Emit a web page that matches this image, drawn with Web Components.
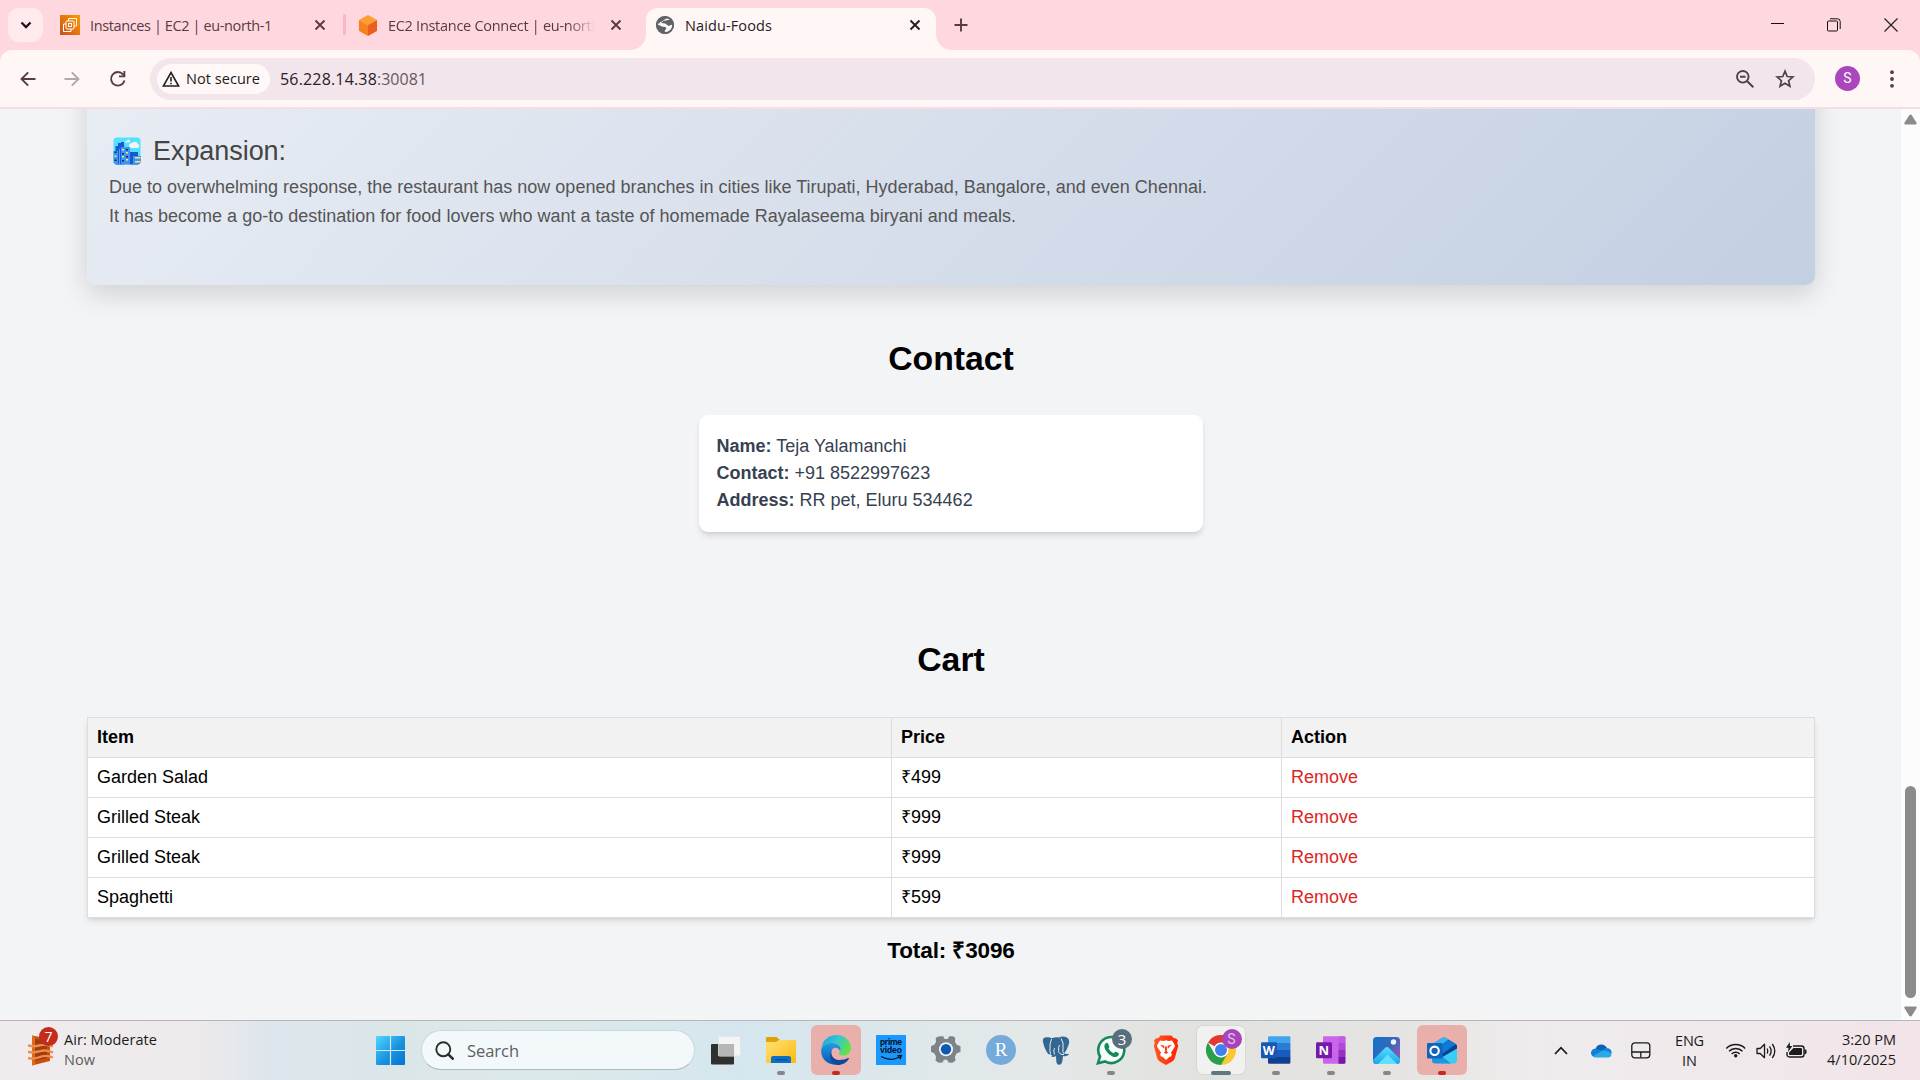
<!DOCTYPE html>
<html lang="en">
<head>
<meta charset="utf-8">
<title>Naidu-Foods</title>
<style>
html,body{margin:0;height:100%;overflow:hidden}
body{width:1920px;height:1080px;background:#f3f4f6}
</style>
</head>
<body>
<desktop-screen></desktop-screen>
<script>
const UI = '"Open Sans","Noto Sans",sans-serif';
const define = (name, html, hook) => {
  const t = document.createElement('template');
  t.innerHTML = html;
  customElements.define(name, class extends HTMLElement {
    constructor() {
      super();
      this.attachShadow({mode: 'open'}).appendChild(t.content.cloneNode(true));
    }
    connectedCallback() { if (hook) hook(this, this.shadowRoot); }
  });
};

/* name: [width, height, viewBox, markup] */
const ICONS = {
  down: [12, 8, '0 0 12 8', '<path d="M1.5 1.5 6 6l4.500-4.500" fill="none" stroke="#1f1416" stroke-width="2.300"/>'],
  ec2: [20, 20, '0 0 20 20', '<defs><linearGradient id="g" x1="0" y1="1" x2="1" y2="0"><stop stop-color="#c8511b"/><stop offset="1" stop-color="#f90"/></linearGradient></defs><rect width="20" height="20" fill="url(#g)"/><g fill="none" stroke="#fff" stroke-width="1"><path d="M8.500 6V3.500h8V11H14M6 9H3.500v7.500H11V14"/><rect x="6" y="6" width="8" height="8" rx="1"/><rect x="8.500" y="8.500" width="3" height="3"/></g>'],
  cube: [20, 21, '0 0 20 21', '<path d="m10 0 9 5-9 5-9-5z" fill="#ff9d2e"/><path d="m1 5 9 5v11l-9-5z" fill="#f58220"/><path d="m19 5-9 5v11l9-5z" fill="#e9601e"/>'],
  x: [12, 12, '0 0 12 12', '<path d="m1.500 1.500 9 9m0-9-9 9" stroke="currentColor" stroke-width="1.900"/>'],
  globe: [20, 20, '0 0 20 20', '<circle cx="10" cy="10" r="9" fill="#5f6368"/><path d="M15.500 4.500C13 3 11 3.500 9.800 4.500 8.500 5.700 6.500 5.300 6.300 7c-.1 1.500 2.400 1.100 3.900 1.600 1.600.5 1.500 2 3.200 2.200 1.500.2 2-1.300 3.900-1 .3 3.400-2.300 6.700-5.700 7.200-1.300.1-2.200-.3-1.700-1.500.4-1 1.300-1.300 1.300-2.300 0-1.200-1.700-1.300-3.100-1.400C6 11.600 5 10.200 2.800 9.800c0-1 .2-1.900.6-2.800" fill="#fff7f5"/><path d="M8 3.200c1.200.3 1.300 1.400.3 2.200C7.100 6.300 5 6.300 4.500 8.200L3 9c.2-3 2.500-5.300 5-5.800zM12.500 6.200c1.200.2 1.200 1.600 2.800 1.400l.7-1.600-1.300-1.500z" fill="#5f6368"/><circle cx="10" cy="10" r="8.200" fill="none" stroke="#5f6368" stroke-width="1.700"/>'],
  plus: [14, 14, '0 0 14 14', '<path d="M7 .5v13M.5 7h13" stroke="#5a3a42" stroke-width="1.900"/>'],
  min: [13, 13, '0 0 13 13', '<path d="M0 5.500h13" stroke="#111" stroke-width="1"/>'],
  max: [14, 14, '0 0 14 14', '<rect x=".5" y="3" width="10" height="10" rx="1" fill="none" stroke="#111"/><path d="M3 .8h7.500q2.700 0 2.700 2.700V11" fill="none" stroke="#111"/>'],
  close: [14, 14, '0 0 14 14', '<path d="m.5.500 13 13m0-13-13 13" stroke="#222" stroke-width="1.200"/>'],
  back: [16, 16, '0 0 16 16', '<path d="M15.500 8H2M8.200 1.300 1.500 8l6.700 6.700" fill="none" stroke="#5a3b42" stroke-width="1.900"/>'],
  fwd: [16, 16, '0 0 16 16', '<path d="M.5 8H14M7.800 1.300 14.500 8l-6.700 6.700" fill="none" stroke="#b5a6a8" stroke-width="1.900"/>'],
  reload: [18, 18, '0 0 18 18', '<path d="M15.500 10.500A6.800 6.800 0 1 1 14 4.300l1.700 1.900" fill="none" stroke="#5a3b42" stroke-width="1.900"/><path d="M16.300 1v6.300H10V5.500h4.400V1z" fill="#5a3b42"/>'],
  warn: [18, 16, '0 0 18 16', '<path d="M9 1.500 16.600 15H1.400z" fill="none" stroke="#222" stroke-width="1.600"/><path d="M9 6v4.500m0 1.200v1.500" stroke="#222" stroke-width="1.600"/>'],
  zoomout: [20, 20, '0 0 20 20', '<circle cx="7.800" cy="7.800" r="5.800" fill="none" stroke="#4d4246" stroke-width="1.900"/><path d="m12 12 6.300 6.300M5 7.800h5.600" stroke="#4d4246" stroke-width="2"/>'],
  star: [20, 20, '0 0 20 20', '<path d="m10 2.200 2.200 5.300 5.700.500-4.300 3.700 1.300 5.600L10 14.300l-4.900 3 1.300-5.600L2.100 8l5.700-.5z" fill="none" stroke="#4d4246" stroke-width="1.700"/>'],
  dots: [4, 18, '0 0 4 18', '<g fill="#5a3b42"><circle cx="2" cy="2.200" r="1.900"/><circle cx="2" cy="9" r="1.900"/><circle cx="2" cy="15.800" r="1.900"/></g>'],
  up: [13, 11, '0 0 13 11', '<path d="M6.500.5q.8 0 1.300.8l4.700 7.500q.7 1.500-.8 1.700H1.300Q-.2 10.300.5 8.800L5.200 1.300Q5.700.5 6.500.5z" fill="#8b8b8b"/>'],
  dn: [13, 11, '0 0 13 11', '<path d="M6.500 10.500q.8 0 1.300-.8l4.700-7.500Q13.200.7 11.700.500H1.300Q-.2.700.5 2.200l4.700 7.500q.5.800 1.300.8z" fill="#8b8b8b"/>'],
  city: [28, 28, '0 0 28 28', '<defs><clipPath id="c"><rect x=".5" y=".5" width="27" height="27" rx="3.500"/></clipPath></defs><g clip-path="url(#c)"><rect width="28" height="28" fill="#50e2ff"/><path d="M16 8a3 3 0 0 1 3-2 3.500 3.500 0 0 1 6 1q2 1 1 3-1 1.500-3 1h-4q-3.500-.3-3-3zM12 5q0-1.500 2-1.500 1.500-2 3 0 .8 2-1 2h-3z" fill="#f4f4f4"/><path d="M2.500 9H5V6h3V5h3v23H2.500zM17 15h8v4h3v9H17z" fill="#1c56d8"/><path d="M0 14h5v14H0zM8 10h9v18H8zM20 19h8v9h-8z" fill="#3a96f2"/><path d="M6 12h1v16H6z" fill="#50a8ff"/><g fill="#ffe45e"><path d="M9 12h2v1.500H9zm4 3h2v1.500h-2zM9 19h2v1.500H9zm4 3h2v1.500h-2zM1.500 18.500h2V20h-2zM22 20h6v1.500h-6zm0 4h6v1.500h-6z"/></g><g fill="#14225c"><path d="M13 12h2v1.500h-2zm-4 4h2v1.500H9zm4 3h2v1.500h-2zm-4 4h2v1.500H9zM1.500 14.500h2V16h-2zm0 8h2V24h-2z"/></g></g>'],
  air: [27, 31, '0 0 27 31', '<path d="M4 .5 22 4v22L4 30.500z" fill="#c8500f"/><path d="M7 4v22l12-3V6z" fill="#9e3d0e"/><path d="M4 .5 7 2v27l-3 1.500z" fill="#e06a1c"/><path d="M0 10.500q6 1.500 11 0t14 .8M0 17q6 1 12-.800t13 1.300M0 23q6 1.500 12-1t13 .5" fill="none" stroke="#f28a4b" stroke-width="2.400"/>'],
  win: [29, 29, '0 0 29 29', '<defs><linearGradient id="w" x1="0" y1="0" x2="29" y2="29" gradientUnits="userSpaceOnUse"><stop stop-color="#50d8ff"/><stop offset=".55" stop-color="#1a93e0"/><stop offset="1" stop-color="#0272cf"/></linearGradient></defs><path d="M1 0h12.900v13.900H0V1q0-1 1-1zm14.100 0H28q1 0 1 1v12.900H15.100zM0 15.100h13.900V29H1q-1 0-1-1zm15.100 0H29V28q0 1-1 1H15.100z" fill="url(#w)"/>'],
  mag: [19, 19, '0 0 19 19', '<circle cx="8.300" cy="8.300" r="7" fill="none" stroke="#2a2c2e" stroke-width="1.900"/><path d="m13.300 13.300 4.400 4.400" stroke="#2a2c2e" stroke-width="2.600" stroke-linecap="round"/>'],
  task: [30, 29, '0 0 30 29', '<rect y="8" width="23" height="20.500" rx="1" fill="#30312f"/><rect x="7.500" y=".5" width="22" height="19.500" rx="1" fill="#f4f4f4" stroke="#e2e5e6"/><path d="M7.500 8H23v12H7.500z" fill="#b5b7b6"/>'],
  folder: [30, 27, '0 0 30 27', '<defs><linearGradient id="f" x1="0" y1="0" x2="1" y2="1"><stop stop-color="#ffe07a"/><stop offset="1" stop-color="#ffb90a"/></linearGradient></defs><path d="M0 1q0-1 1-1h9.500l3.500 3H28q2 0 2 2v6H0z" fill="#e0a006"/><path d="M0 5h10l3-2h16q1 0 1 1v21q0 1-1 1H1q-1 0-1-1z" fill="url(#f)"/><path d="M5 26v-5q0-2 2-2h16q2 0 2 2v5z" fill="#0f6fc7"/><path d="M9 22h12v1.500H9z" fill="#0a4f95"/>'],
  edge: [30, 30, '0 0 30 30', '<defs><linearGradient id="e" x1="0" y1="0" x2="1" y2=".5"><stop stop-color="#1a9fe0"/><stop offset=".5" stop-color="#33c5d6"/><stop offset="1" stop-color="#5fe24c"/></linearGradient><linearGradient id="e2" x1="0" y1="0" x2="0" y2="1"><stop stop-color="#1f9de2"/><stop offset="1" stop-color="#0d54ad"/></linearGradient></defs><path d="M.5 14C1 5 8 0 15.500 0 24 0 30 6 30 13c0 5-4 7.500-7.500 7.500S18 19 18 18s1.500-1.800 1.500-4c0-3.500-4-6-8.500-6C5.500 8 1.500 11 .5 14z" fill="url(#e)"/><path d="M.3 14.500C1.500 10.500 5.500 8 10.500 8c5 0 9 2.500 9 6 0 .7-.2 1.500-.5 2-1-3-4-4-6-3-2.700 1.500-3.500 4-3 7 .7 4.500 4.500 8.500 9 9.200C10 31.500-1 26 .3 14.500z" fill="url(#e2)"/><path d="M11.500 14c-3 4 0 11 6.500 11 4 0 7-1 9-2 .8-.3 1.200.3.800 1-2.300 3.800-6.500 6-11 6C10 29 6.500 20 11.500 14z" fill="#10489b"/>'],
  prime: [30, 30, '0 0 30 30', '<rect width="30" height="30" fill="#1a98ff"/><g font-family="Lato,sans-serif" font-weight="900" font-size="9" fill="#06131f"><text x="4" y="9.800" textLength="22">prime</text><text x="4" y="17.800" textLength="22">video</text></g><path d="M5 21.500q10 5.500 18.500.500M21.500 20.800l3.800-.3-1.300 3.800" fill="none" stroke="#06131f" stroke-width="1.400"/>'],
  gear: [30, 30, '0 0 30 30', '<path d="M8.500 1.300h3.700l1.300 2.700h3.300l1.300-2.700h3.700l2.500 1.500-.3 4.200 1.500 2.500 4 1.700v5.500l-4 1.700-1.500 3 .5 4.100-3 2.200-4-.3-1.500-2.600h-3l-1.500 2.700-4 .3-3-2.300.5-4.100-1.500-3-3.500-1.700v-5.500L3.500 9.500 5 7l-.3-4.200z" fill="#7e8388"/><circle cx="15" cy="14.300" r="7" fill="#f1f5f8"/><circle cx="15" cy="14.300" r="5.200" fill="#0d5ab5"/>'],
  rlogo: [30, 30, '0 0 30 30', '<circle cx="15" cy="15" r="15" fill="#75aadb"/><text x="15" y="21.300" text-anchor="middle" font-family="Liberation Serif,serif" font-size="19" fill="#fff">R</text>'],
  pg: [28, 29, '0 0 28 29', '<path d="M1 6Q0 1 5 1.200q3 .1 5 1 3-1.400 7-.8Q21-.2 25 1.500q3.500 2 1.500 7.500-1.500 5-4.500 8.500 2 .7 4 .2l1 .8q-2.500 2.500-6 1.500-.3 4-1 6.500-1 2.500-3 2.200-2.500-.2-2.700-3.700l-.300-5q-1 1-3 1-3-.2-2.500-2.500-2.500.5-4-3Q2 11.500 1 6z" fill="#336791"/><path d="M9.500 3Q7.500 8 8 12q-.5 3 .5 5.500-1.500 2.500 1.500 2M19 2.500q3 4 2 10-.5 3.500.5 5M12.500 18.500q-1.500-5.500.5-6.500M17.500 9q-1 1.500-1 5.500.5 4.500 5.500 4" fill="none" stroke="#e8eef2" stroke-width="1"/>'],
  wa: [30, 30, '0 0 30 30', '<path d="M2 28.200 4 21.500A13 13 0 1 1 9 26.400z" fill="#f7fbf9" stroke="#16895a" stroke-width="2.600"/><path d="M9.500 8.500q1.500-1.300 2.500 0l1.300 2.700q.3.900-.8 2.300 1.700 3.300 5 4.800 1.500-2 2.400-1.600l2.600 1.400q1 .8-.3 2.700-2.200 2.200-5.700.7-4.500-2-7-6.500-2.300-4 0-6.500z" fill="#16895a"/>'],
  brave: [26, 30, '0 0 26 30', '<defs><linearGradient id="b"><stop stop-color="#ff5a22"/><stop offset="1" stop-color="#ff2200"/></linearGradient></defs><path d="M7.500.5h11l2 2.500q3-.5 4.500 2.500l-.8 2.500 1 3-3.500 12.500q-.8 2-2.500 3L13 30l-6.200-3.500q-1.700-1-2.500-3L.8 11l1-3L1 5.500Q2.500 2.500 5.500 3z" fill="url(#b)"/><path d="m4.500 9.500 2.500-4 3.500.5 2.500-.7 2.500.7 3.500-.5 2.500 4 .5 2-4 6 .8 2.300-.8 1.700-1.500.2-3.500 3.300-3.500-3.300-1.500-.2-.8-1.700.8-2.300-4-6z" fill="#fff"/><path d="m7 9.700 4.300 1-.300 2.800zM19 9.700l-4.300 1 .3 2.800zM11.700 11.500h2.600l-.5 5 1.400 1-2.200 1.500-2.200-1.500 1.400-1z" fill="#ff3b13"/>'],
  chrome: [30, 30, '0 0 30 30', '<path d="M15 15 2 7.500A15 15 0 0 1 28 7.500H15z" fill="#e13b30"/><path d="M15 0A15 15 0 0 1 28 7.500L15 8z" fill="#e13b30"/><path d="M28 7.500A15 15 0 0 1 15 30l6.500-11.500L19 7.500z" fill="#fdc82f"/><path d="M2 7.500A15 15 0 0 0 15 30l6.500-11.200L8.500 18.800z" fill="#2a9e4b"/><circle cx="15" cy="15" r="7.500" fill="#fff"/><circle cx="15" cy="15" r="6" fill="#3f80ec"/>'],
  word: [30, 28, '0 0 30 28', '<path d="M7 1.500Q7 .3 8.200.3H28q1.400 0 1.400 1.400V7H7z" fill="#41a5ee"/><path d="M7 7h22.400v7H7z" fill="#2b7cd3"/><path d="M7 14h22.400v7H7z" fill="#185abd"/><path d="M7 21h22.400v5.500q0 1.300-1.400 1.300H8.200Q7 27.800 7 26.500z" fill="#103f91"/><rect y="6.300" width="16" height="16" rx="1.300" fill="#1a56b4"/><text x="7.800" y="19" text-anchor="middle" font-family="Open Sans,sans-serif" font-weight="700" font-size="12.500" fill="#fff">W</text>'],
  note: [30, 28, '0 0 30 28', '<path d="M7 1.500Q7 .3 8.200.3H28q1.400 0 1.400 1.400V26q0 1.800-1.400 1.800H8.200Q7 27.800 7 26.500z" fill="#ca64ea"/><path d="M22.500.3h5.500q1.400 0 1.400 1.400V7h-6.900z" fill="#c55be6"/><path d="M22.500 7h6.900v7h-6.900z" fill="#ae4bd5"/><path d="M22.500 14h6.900v7h-6.900z" fill="#9332bf"/><path d="M22.500 21h6.900v5.500q0 1.300-1.400 1.300h-5.500z" fill="#7719aa"/><rect y="6.300" width="16" height="16" rx="1.300" fill="#7719aa"/><text x="7.800" y="19" text-anchor="middle" font-family="Open Sans,sans-serif" font-weight="700" font-size="13" fill="#fff">N</text>'],
  photos: [28, 27, '0 0 28 27', '<defs><linearGradient id="p" x1="0" y1="0" x2="1" y2=".6"><stop stop-color="#0b74cf"/><stop offset=".6" stop-color="#3a66b8"/><stop offset="1" stop-color="#8759b5"/></linearGradient><linearGradient id="p2" x1="0" y1="0" x2="0" y2="1"><stop stop-color="#55dcff"/><stop offset="1" stop-color="#1aa8ea"/></linearGradient><clipPath id="pc"><rect width="27" height="27" rx="3.500"/></clipPath></defs><g clip-path="url(#pc)"><rect width="27" height="27" fill="url(#p)"/><path d="M0 23 12 11q2-1.800 4 0l11 11v5H0z" fill="url(#p2)"/><path d="m5 27 9.500-9.500L24 27z" fill="#5fe0ff"/><circle cx="20.500" cy="5" r="2.700" fill="#e8f6ff"/></g>'],
  outlook: [30, 27, '0 0 30 27', '<path d="m4 8 11-7q2-1 4 0l10 6q1 .8 1 2v6L16 21z" fill="#1469c8"/><path d="M4 8 15 1q2-1 4 0l2.500 1.500L9 12z" fill="#35b4f0"/><path d="m10 12 12.500-8.500L28 7 16 16z" fill="#0f7ad6"/><path d="m15 17 14-9.500q1 .8 1 2v4L16 21z" fill="#0a3f8f"/><path d="M30 11.500 12 22v1.500q0 3 3 3h12q3 0 3-3z" fill="#37cdf5"/><path d="M5 20h11l8 6.500H8q-3 0-3-3z" fill="#1c96e0"/><rect y="6" width="15.500" height="15.500" rx="1.300" fill="#0f65bd"/><circle cx="7.600" cy="13.800" r="4.200" fill="none" stroke="#fff" stroke-width="2.100"/>'],
  chev: [14, 9, '0 0 14 9', '<path d="M1 8l6-6.300L13 8" fill="none" stroke="#1b1b1b" stroke-width="1.800"/>'],
  cloud: [21, 14, '0 0 21 14', '<path d="M3 12.500Q0 11 .2 8.500.8 5 4.500 4.800 6 .5 10.500.5q3.500 0 5.500 3.500z" fill="#0364b8"/><path d="m5 5 7 1.500L16 4q4.500.5 4.700 5L4 13Q0 12.500.2 8.500.5 5.500 5 5z" fill="#1380d6"/><path d="m2 12 9-5q2-1 5 .3l4.500 2Q20.500 13.500 17 13.600H4.500Q3 13.600 2 12z" fill="#29a8ea"/>'],
  pad: [20, 17, '0 0 20 17', '<rect x=".8" y=".8" width="18" height="15" rx="3" fill="none" stroke="#1b1b1b" stroke-width="1.300"/><path d="M1 10h17.500M9.800 10v5.500" stroke="#1b1b1b" stroke-width="1.300"/>'],
  wifi: [22, 16, '0 0 22 16', '<g fill="none" stroke="#1b1b1b" stroke-width="1.500"><path d="M1.300 6.500a13.200 13.200 0 0 1 18.900 0M4 9.200a9.500 9.500 0 0 1 13.500 0M6.700 12a5.700 5.700 0 0 1 8 0"/></g><circle cx="10.700" cy="13.800" r="1.700" fill="#1b1b1b"/>'],
  sound: [21, 18, '0 0 21 18', '<g fill="none" stroke="#1b1b1b" stroke-width="1.300"><path d="M1 6.500h3.200L8.500 2.300v13.400l-4.300-4.200H1z" stroke-linejoin="round"/><path d="M11 6.500q1.500 2.500 0 5M13.500 4.300q3.300 4.700 0 9.400M16.300 2q5 7 0 14"/></g>'],
  batt: [21, 17, '0 0 21 17', '<path d="M7 4h8.500Q18 4 18 6.500v6q0 2.500-2.500 2.500h-12Q1 15 1 12.500V10" fill="none" stroke="#1b1b1b" stroke-width="1.400"/><path d="M7.500 6H15q1 0 1 1v5q0 1-1 1H4q-1 0-1-1v-1.500z" fill="#1b1b1b"/><path d="M18.500 7.500h1q1 0 1 1V11q0 1-1 1h-1zM3.800 0 0 5.700h2.500L2 10l4.300-6H3.800z" fill="#1b1b1b"/>'],
};
define('ui-icon', `<style>:host{display:block;flex:none}svg{display:block}</style>`, (el, r) => {
  const [w, h, vb, m] = ICONS[el.getAttribute('name')];
  r.querySelector('svg')?.remove();
  r.appendChild(document.createRange().createContextualFragment(
    `<svg xmlns="http://www.w3.org/2000/svg" width="${w}" height="${h}" viewBox="${vb}">${m}</svg>`));
});

/* One line of text whose tracking is set so that it spans "w" pixels. */
define('ui-text', `<style>:host{display:block;white-space:pre;flex:none}span{display:inline-block}</style><span><slot></slot></span>`, (el, r) => {
  const w = +el.getAttribute('w'), s = r.querySelector('span');
  if (!w) return;
  s.style.letterSpacing = '0';
  const n = s.getBoundingClientRect().width;
  s.style.letterSpacing = ((w - n) / el.textContent.length).toFixed(3) + 'px';
});

define('tab-strip', `<style>
:host{display:flex;height:50px;background:#ffd8df;align-items:flex-start;font:14.500px/20px ${UI};color:#5a3a42}
.search{width:35px;height:34px;margin:8px 17px 0 8px;border-radius:11px;background:#ffeaee;display:grid;place-items:center}
.tab{display:flex;align-items:center;height:34px;margin-top:8px;color:#5a3a42}
.tab ui-text{padding-top:2px}
.t1{width:266px;gap:10px}.t1 ui-text{width:214px}
.sep{width:3px;height:21px;margin:14px 12px 0 17px;background:#ffb5c6;border-radius:2px;flex:none}
.t2{gap:10px;width:266px}
.clip{width:208px;-webkit-mask-image:linear-gradient(90deg,#000 180px,transparent 207px);mask-image:linear-gradient(90deg,#000 180px,transparent 207px)}
.act{width:290px;height:42px;margin:8px 0 0 22px;background:#fff7f5;border-radius:12px 12px 0 0;position:relative;display:flex;align-items:flex-start;color:#2b1a1e}
.act ui-icon{margin-top:7px}.act .g{margin-left:9px}.act ui-text{margin:8px 0 0 10px;width:224px}.act .c{margin-top:11px}
.act:before,.act:after{content:"";position:absolute;bottom:0;width:15px;height:15px;background:radial-gradient(circle at 0 0,transparent 14.5px,#fff7f5 15px)}
.act:before{left:-15px}.act:after{right:-15px;transform:scaleX(-1)}
.plus{margin:18px 0 0 18px}
.win{margin-left:auto;display:flex;gap:43px;padding:18px 22px 0 0}
</style>
<div class="search"><ui-icon name="down"></ui-icon></div>
<div class="tab t1"><ui-icon name="ec2"></ui-icon><ui-text w="182">Instances | EC2 | eu-north-1</ui-text><ui-icon name="x"></ui-icon></div>
<div class="sep"></div>
<div class="tab t2"><ui-icon name="cube"></ui-icon><div class="clip"><ui-text w="212">EC2 Instance Connect | eu-north</ui-text></div><ui-icon name="x" style="margin-left:4px"></ui-icon></div>
<div class="act"><ui-icon class="g" name="globe"></ui-icon><ui-text w="87">Naidu-Foods</ui-text><ui-icon class="c" name="x"></ui-icon></div>
<ui-icon class="plus" name="plus"></ui-icon>
<div class="win"><ui-icon name="min"></ui-icon><ui-icon name="max"></ui-icon><ui-icon name="close"></ui-icon></div>`);

define('tool-bar', `<style>
:host{display:block;background:#ffd8df;font:16px/22px ${UI};color:#2b2024}
.bar{display:flex;align-items:center;height:57px;box-sizing:border-box;background:#fff7f5;border-radius:12px 12px 0 0;padding-left:20px}
.line{height:2px;background:#f4dee4}
.omni{display:flex;align-items:center;box-sizing:border-box;width:1665px;height:42px;border-radius:21px;background:#f2e5ec;margin-left:23px;padding:0 20px 0 7px}
.chip{display:flex;align-items:center;gap:6px;width:113px;height:30px;border-radius:15px;background:#fff8f6;padding-left:5px;box-sizing:border-box;font-size:14.500px;font-weight:500;color:#1e1a1c}
.url{display:flex;margin-left:10px;margin-right:auto;padding-top:1px}
.port{color:#65595f}
.av{width:25px;height:25px;border-radius:50%;background:#ab47bc;color:#fff;font:14px/25px Roboto,sans-serif;text-align:center;margin:0 30px 0 20px}
</style>
<div class="bar"><ui-icon name="back"></ui-icon><ui-icon name="fwd" style="margin-left:28px"></ui-icon><ui-icon name="reload" style="margin-left:29px"></ui-icon>
<div class="omni"><div class="chip"><ui-icon name="warn"></ui-icon><ui-text w="74">Not secure</ui-text></div>
<div class="url"><ui-text w="97">56.228.14.38</ui-text><ui-text class="port" w="50">:30081</ui-text></div>
<ui-icon name="zoomout" style="margin-right:20px"></ui-icon><ui-icon name="star"></ui-icon></div>
<div class="av">S</div><ui-icon name="dots"></ui-icon></div><div class="line"></div>`);

define('scroll-bar', `<style>
:host{display:flex;flex-direction:column;align-items:center;width:19px;background:#fcfcfc;flex:none}
.thumb{width:11px;height:212px;border-radius:6px;background:#8b8b8b;margin:661px 0 8px}
ui-icon{margin-top:5px}ui-icon.d{margin-top:0}
</style><ui-icon name="up"></ui-icon><div class="thumb"></div><ui-icon class="d" name="dn"></ui-icon>`);

define('story-card', `<style>
:host{display:flex;flex-direction:column;justify-content:flex-end;box-sizing:border-box;height:850px;margin-top:-674px;padding:0 22px 54px;border-radius:9px;background:linear-gradient(135deg,#f5f7fa,#c3cfe2);box-shadow:0 9px 28px rgba(0,0,0,.15);color:#555}
.h{display:flex;align-items:center;gap:12px;font-size:27px;line-height:32px;color:#444;padding-left:4px;margin-bottom:6px}
.p{font-size:18px;line-height:29px}
</style>
<div class="h"><ui-icon name="city"></ui-icon><ui-text w="133">Expansion:</ui-text></div>
<ui-text class="p" w="1098">Due to overwhelming response, the restaurant has now opened branches in cities like Tirupati, Hyderabad, Bangalore, and even Chennai.</ui-text>
<ui-text class="p" w="907">It has become a go-to destination for food lovers who want a taste of homemade Rayalaseema biryani and meals.</ui-text>`);

define('section-title', `<style>:host{display:block;text-align:center;font-weight:700;font-size:33.750px;line-height:40px;color:#000}</style><slot></slot>`);

define('contact-card', `<style>
:host{display:block;box-sizing:border-box;width:504px;height:117px;margin:0 auto;padding:18px 17.500px;background:#fff;border-radius:9px;box-shadow:0 4.500px 6.750px -1px rgba(0,0,0,.1),0 2px 4.500px -2px rgba(0,0,0,.12);font-size:18px;line-height:27px;color:#374151}
</style><slot></slot>`);

define('cart-row', `<style>
:host{display:grid;grid-template-columns:804px 390px 1fr;height:39px;line-height:39px;border-top:1px solid #ddd;background:#fff;color:#000}
:host([head]){background:#f2f2f2;font-weight:700}
div{padding-left:9px;border-left:1px solid #ddd}
.a{border-right:1px solid #ddd;color:#dc2626}
:host([head]) .a{color:#000}
</style><div><slot name="item"></slot></div><div><slot name="price"></slot></div><div class="a"><slot name="action">Remove</slot></div>`);

define('cart-table', `<style>
:host{display:block;border-bottom:1px solid #ddd;font-size:18px;box-shadow:0 4.500px 6.750px -1px rgba(0,0,0,.1),0 2px 4.500px -2px rgba(0,0,0,.1)}
</style><slot></slot>`);

define('food-page', `<style>
:host{display:block;flex:1;height:911px;overflow:hidden;box-sizing:border-box;padding:0 86px 0 87px;background:#f3f4f6;font-family:"Liberation Sans",Arial,sans-serif}
.t1{margin:53px 0 37px}.t2{margin:107px 0 38px}
.total{text-align:center;font-weight:700;font-size:22.500px;line-height:32px;margin-top:17px;letter-spacing:-.12px}
</style>
<story-card></story-card>
<section-title class="t1">Contact</section-title>
<contact-card><div><b>Name:</b> Teja Yalamanchi</div><div><b>Contact:</b> +91 8522997623</div><div><b>Address:</b> RR pet, Eluru 534462</div></contact-card>
<section-title class="t2">Cart</section-title>
<cart-table>
<cart-row head><span slot="item">Item</span><span slot="price">Price</span><span slot="action">Action</span></cart-row>
<cart-row><span slot="item">Garden Salad</span><span slot="price">₹499</span></cart-row>
<cart-row><span slot="item">Grilled Steak</span><span slot="price">₹999</span></cart-row>
<cart-row><span slot="item">Grilled Steak</span><span slot="price">₹999</span></cart-row>
<cart-row><span slot="item">Spaghetti</span><span slot="price">₹599</span></cart-row>
</cart-table>
<div class="total">Total: ₹3096</div>`);

define('task-app', `<style>
:host{display:grid;place-items:center;width:55px;height:59px;position:relative;flex:none}
.tile{display:grid;place-items:center;width:50px;height:50px;border-radius:6px;margin-bottom:1px}
:host([alert]) .tile{background:#e9afab}
:host([active]) .tile{width:48px;height:48px;background:#f1f1f0;box-shadow:0 0 1px 1px rgba(0,0,0,.05)}
.dot{display:none;position:absolute;bottom:5px;left:23.500px;width:8px;height:4px;border-radius:2px;background:#868686}
:host([open]) .dot{display:block}
:host([alert]) .dot{background:#c42b1c}
:host([active]) .dot{width:20px;left:17.500px;background:#5f7685}
.badge{position:absolute;right:6px;top:8px;width:20px;height:20px;border-radius:50%;text-align:center;font:15px/20px ${UI};color:#fff;background:#586e7c}
:host([active]) .badge{right:6.500px;background:#a744ba;color:#e6bfee;font:14px/20px Roboto,sans-serif}
.badge:empty{display:none}
</style><div class="tile"></div><div class="dot"></div><div class="badge"></div>`, (el, r) => {
  r.querySelector('.tile').innerHTML = `<ui-icon name="${el.getAttribute('icon')}"></ui-icon>`;
  r.querySelector('.badge').textContent = el.getAttribute('badge') || '';
});

define('task-bar', `<style>
:host{display:flex;align-items:center;box-sizing:border-box;height:60px;border-top:1px solid #b4b6b9;background:linear-gradient(90deg,#f0ebec 0,#eeeaec 190px,#dde6ec 270px,#dbe6e9 400px,#dce9ea 550px,#d5e6ee 740px,#dfe8ea 930px,#e4e8e8 1040px,#e2e2df 1200px,#e5e4e2 1400px,#efebec 1520px,#f0e9eb 1750px,#f2e4e8 1900px);font:14.500px/20px ${UI};color:#1b1b1b}
.w{display:flex;gap:9px;width:335px;padding-left:28px;align-items:center;margin-top:-2px}
.ic{position:relative;height:36px;width:27px;padding-top:5px;box-sizing:border-box;margin-top:-3px}
.bd{position:absolute;left:11px;top:-3px;width:19px;height:19px;border-radius:50%;background:#c42b1c;color:#fff;text-align:center;font-size:14px;line-height:19px}
.now{color:#5c5c5e}
.search{display:flex;align-items:center;gap:13px;box-sizing:border-box;width:274px;height:40px;border-radius:20px;background:#f3f8fa;border:1px solid #c9d8de;border-bottom-color:#b1bcc1;margin:-1px 3px 0 3px;padding-left:13px;font-size:16.500px;color:#5c6063}
.search ui-text{padding-top:2px}
.tray{display:flex;align-items:center;margin-left:auto;padding-right:24px}
.tray>ui-icon{margin-top:-1px}
.c{display:flex;flex-direction:column;align-items:center}.r{align-items:flex-end;margin-top:-2px}
</style>
<div class="w"><div class="ic"><ui-icon name="air"></ui-icon><div class="bd">7</div></div><div><ui-text w="93">Air: Moderate</ui-text><ui-text class="now" w="31">Now</ui-text></div></div>
<task-app icon="win"></task-app>
<div class="search"><ui-icon name="mag"></ui-icon><ui-text w="52">Search</ui-text></div>
<task-app icon="task"></task-app><task-app icon="folder" open></task-app><task-app icon="edge" open alert></task-app><task-app icon="prime"></task-app><task-app icon="gear"></task-app><task-app icon="rlogo"></task-app><task-app icon="pg"></task-app><task-app icon="wa" open badge="3"></task-app><task-app icon="brave"></task-app><task-app icon="chrome" open active badge="S"></task-app><task-app icon="word" open></task-app><task-app icon="note" open></task-app><task-app icon="photos" open style="margin-left:1px"></task-app><task-app icon="outlook" open alert></task-app>
<div class="tray"><ui-icon name="chev"></ui-icon><ui-icon name="cloud" style="margin:0 19px 0 23px"></ui-icon><ui-icon name="pad"></ui-icon>
<div class="c" style="margin:0 21px 0 24px"><ui-text w="29">ENG</ui-text><ui-text w="15">IN</ui-text></div>
<ui-icon name="wifi"></ui-icon><ui-icon name="sound" style="margin:0 9px"></ui-icon><ui-icon name="batt"></ui-icon>
<div class="c r" style="margin-left:20px"><ui-text w="54">3:20 PM</ui-text><ui-text w="69">4/10/2025</ui-text></div></div>`);

define('desktop-screen', `<style>:host{display:flex;flex-direction:column;width:1920px;height:1080px;overflow:hidden}.v{display:flex;height:911px}</style>
<tab-strip></tab-strip><tool-bar></tool-bar><div class="v"><food-page></food-page><scroll-bar></scroll-bar></div><task-bar></task-bar>`);
</script>
</body>
</html>
